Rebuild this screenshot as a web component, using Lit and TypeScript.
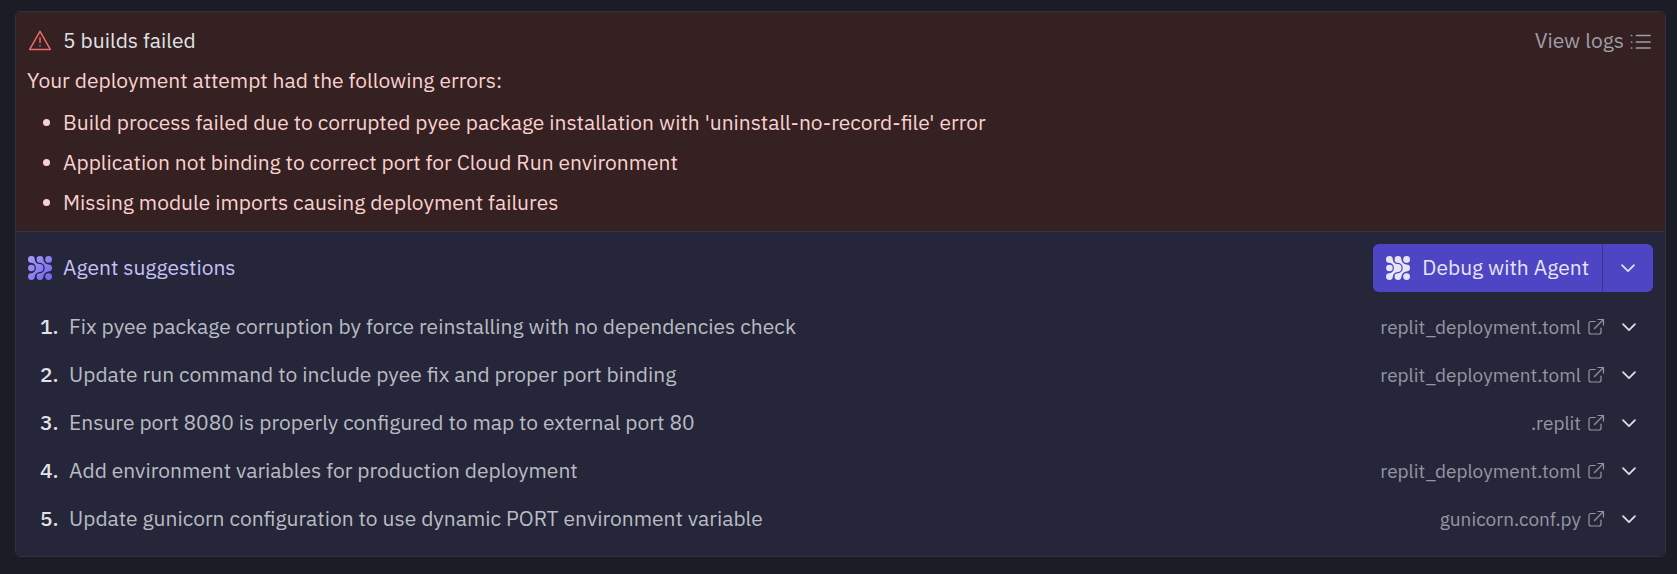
import { LitElement, html, css, svg } from "lit";
import { customElement } from "lit/decorators.js";

const errors = [
  "Build process failed due to corrupted pyee package installation with 'uninstall-no-record-file' error",
  "Application not binding to correct port for Cloud Run environment",
  "Missing module imports causing deployment failures",
];

const suggestions = [
  { text: "Fix pyee package corruption by force reinstalling with no dependencies check", file: "replit_deployment.toml" },
  { text: "Update run command to include pyee fix and proper port binding", file: "replit_deployment.toml" },
  { text: "Ensure port 8080 is properly configured to map to external port 80", file: ".replit" },
  { text: "Add environment variables for production deployment", file: "replit_deployment.toml" },
  { text: "Update gunicorn configuration to use dynamic PORT environment variable", file: "gunicorn.conf.py" },
];

// Three loose dots plus two arrow-like blobs that flow to the right.
const agentShapes = svg`
  <circle cx="3.4" cy="12" r="3.3"/>
  <circle cx="20.6" cy="3.4" r="3.4"/>
  <circle cx="20.6" cy="20.6" r="3.4"/>
  <path d="M3.4 0A3.4 3.4 0 0 1 6.8 3.4C7 5.6 8.8 8 11.6 8.1A3.9 3.9 0 0 1 11.6 15.9C8.8 16 7 18.4 6.8 20.6A3.4 3.4 0 1 1 3.4 17.2C6 17 7.9 14.8 7.9 12S6 7 3.4 6.8A3.4 3.4 0 0 1 3.4 0Z"/>
  <path d="M12 0A3.4 3.4 0 0 1 15.4 3.4C15.6 5.6 17.4 8.2 20.6 8.5A3.5 3.5 0 0 1 20.6 15.5C17.4 15.8 15.6 18.4 15.4 20.6A3.4 3.4 0 1 1 12 17.2C15 16.9 16.7 14.8 16.7 12S15 7.1 12 6.8A3.4 3.4 0 0 1 12 0Z"/>`;

@customElement("app-root")
export class AppRoot extends LitElement {
  static styles = css`
    :host {
      display: block;
      box-sizing: border-box;
      min-height: 100vh;
      padding: 11px 11px 17px 15px;
      background: #1a1d25;
      color: #e1e2e6;
      font: 21px/34px "IBM Plex Sans", Roboto, sans-serif;
    }
    * { box-sizing: border-box; }
    h2, p, ul, ol { margin: 0; padding: 0; font-size: inherit; font-weight: 400; }
    ul, ol { list-style: none; }
    svg { display: block; flex: none; fill: none; stroke: currentColor; }
    button { border: 0; padding: 0; background: none; color: inherit; font: inherit; cursor: pointer; }
    a { color: inherit; text-decoration: none; }
    .card { border: 1px solid #30333c; border-radius: 6px; overflow: hidden; }
    .failed { padding: 11px 12px 8px; background: #352022; border-bottom: 1px solid #38323c; }
    .bar { display: flex; align-items: center; justify-content: space-between; gap: 12px; }
    .title { display: flex; align-items: center; gap: 11px; }
    .label { padding-bottom: 2px; }
    .warn { color: #ee6a63; }
    .logs { display: flex; align-items: center; gap: 5px; color: #9d9ea6; }
    .intro { color: #fad1cf; padding: 4px 0 6px; margin-left: -1px; }
    .errors { color: #fad1cf; }
    .errors li { display: flex; align-items: center; gap: 13px; padding: 2px 0 4px 15px; }
    .errors li::before { content: ""; flex: none; width: 7px; height: 7px; border-radius: 50%; background: currentColor; }
    .agent { padding: 12px 12px 13px; background: #25263a; }
    .agent .title { color: #c8c1f7; }
    .agent .mark { fill: url(#violet); stroke: none; }
    .split { display: flex; height: 48px; border-radius: 6px; overflow: hidden; background: #4d45c4; }
    .main { display: flex; align-items: center; gap: 12px; padding: 0 13px; color: #e6e6f2; }
    .main svg { fill: currentColor; stroke: none; }
    .more { display: grid; place-items: center; width: 51px; border-left: 1px solid #3a348f; }
    .list { margin-top: 11px; }
    .row { display: flex; align-items: center; height: 48px; padding: 0 12px; }
    .num { flex: none; width: 29px; font-weight: 500; }
    .text { flex: 1; color: #b9bbc1; }
    .file { display: flex; align-items: center; gap: 6px; margin-right: 12px; color: #9496a1; font-size: 19px; }
  `;

  private mark(cls: string) {
    return html`<svg class=${cls} width="24" height="24" viewBox="0 0 24 24" aria-hidden="true">
      <defs><linearGradient id="violet" gradientUnits="userSpaceOnUse" x1="0" y1="0" x2="24" y2="24"><stop offset="0" stop-color="#a79bfb"/><stop offset="1" stop-color="#6f62f2"/></linearGradient></defs>
      ${agentShapes}</svg>`;
  }

  private chevron() {
    return html`<svg width="24" height="24" viewBox="0 0 24 24" stroke-width="1.7" stroke-linecap="round" stroke-linejoin="round" aria-hidden="true"><path d="M6 9.2L12 15.2L18 9.2"/></svg>`;
  }

  render() {
    return html`<section class="card">
      <div class="failed">
        <div class="bar">
          <h2 class="title">
            <svg class="warn" width="24" height="24" viewBox="0 0 24 24" stroke-width="1.5" stroke-linejoin="round" stroke-linecap="round" aria-hidden="true"><path d="M12 2.4L22.3 20.4H1.700Z"/><path d="M12 8.8V13.5M12 16.8V17"/></svg>
            <span class="label">5 builds failed</span>
          </h2>
          <a class="logs" href="#logs"><span class="label">View logs</span>
            <svg width="24" height="24" viewBox="0 0 24 24" stroke-width="1.7" stroke-linecap="round" aria-hidden="true"><path d="M7.5 6.500H21M7.5 13H21M7.5 19H21M2.5 6.500H2.7M2.5 13H2.7M2.5 19H2.7"/></svg>
          </a>
        </div>
        <p class="intro">Your deployment attempt had the following errors:</p>
        <ul class="errors">${errors.map((e) => html`<li>${e}</li>`)}</ul>
      </div>
      <div class="agent">
        <div class="bar">
          <h2 class="title">${this.mark("mark")}<span class="label">Agent suggestions</span></h2>
          <div class="split">
            <button class="main">${this.mark("")}<span class="label">Debug with Agent</span></button>
            <button class="more" aria-label="More options">${this.chevron()}</button>
          </div>
        </div>
        <ol class="list">
          ${suggestions.map((s, i) => html`<li class="row">
            <span class="num label">${i + 1}.</span>
            <span class="text label">${s.text}</span>
            <a class="file" href="#file">${s.file}
              <svg width="18" height="18" viewBox="0 0 18 18" stroke-width="1.2" stroke-linecap="round" stroke-linejoin="round" aria-hidden="true"><path d="M8 3.5H4A2 2 0 0 0 2 5.5V14A2 2 0 0 0 4 16H12A2 2 0 0 0 14 14V10M11 1.5H16.5V7M16.5 1.5L7.5 10.5"/></svg>
            </a>
            <button aria-label="Show details">${this.chevron()}</button>
          </li>`)}
        </ol>
      </div>
    </section>`;
  }
}
